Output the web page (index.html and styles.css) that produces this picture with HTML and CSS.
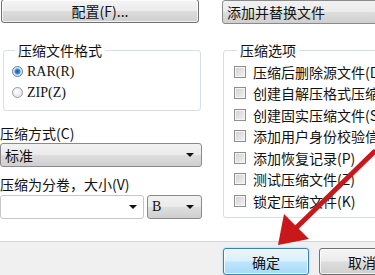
FILE: index.html
```html
<!DOCTYPE html>
<html lang="zh-CN">
<head>
    <meta charset="UTF-8">
    <title>压缩文件名和参数</title>
    <link rel="stylesheet" href="styles.css">
</head>
<body>
    <div class="dialog">
        <div class="main">
            <div class="col-left">
                <button class="btn btn-config">配置(F)...</button>

                <fieldset class="group group-format">
                    <legend>压缩文件格式</legend>
                    <div class="radio-row"><span class="radio checked"></span>RAR(R)</div>
                    <div class="radio-row"><span class="radio"></span>ZIP(Z)</div>
                </fieldset>

                <div class="field-label">压缩方式(C)</div>
                <div class="select select-method"><span>标准</span><span class="caret"></span></div>

                <div class="field-label label-split">压缩为分卷，大小(V)</div>
                <div class="combo-row">
                    <div class="combo"><span></span><span class="caret"></span></div>
                    <div class="select select-unit"><span>B</span><span class="caret"></span></div>
                </div>
            </div>

            <div class="col-right">
                <div class="select select-update"><span>添加并替换文件</span></div>

                <fieldset class="group group-options">
                    <legend>压缩选项</legend>
                    <div class="check-row"><span class="check"></span>压缩后删除源文件(D)</div>
                    <div class="check-row"><span class="check"></span>创建自解压格式压缩文件(X)</div>
                    <div class="check-row"><span class="check"></span>创建固实压缩文件(S)</div>
                    <div class="check-row"><span class="check"></span>添加用户身份校验信息(T)</div>
                    <div class="check-row"><span class="check"></span>添加恢复记录(P)</div>
                    <div class="check-row"><span class="check"></span>测试压缩文件(Z)</div>
                    <div class="check-row"><span class="check"></span>锁定压缩文件(K)</div>
                </fieldset>
            </div>
        </div>

        <div class="footer">
            <button class="btn btn-default">确定</button>
            <button class="btn">取消</button>
        </div>

        <!-- flèche rouge d'annotation -->
        <svg class="arrow" width="375" height="275" viewBox="0 0 375 275">
            <line x1="374" y1="152" x2="296" y2="228" stroke="#c8181c" stroke-width="5" stroke-linecap="round"/>
            <polygon points="278,245 284,214 309,239" fill="#c8181c"/>
        </svg>
    </div>
</body>
</html>
```

FILE: styles.css
```css
/* Fenêtre */
body {
    margin: 0;
    font-family: "Noto Sans CJK SC", "Liberation Sans", sans-serif;
    font-size: 14px;
    color: #111;
    background: #fff;
}

.dialog {
    position: relative;
    width: 375px;
    height: 275px;
    overflow: hidden;
}

.main {
    display: flex;
    height: 241px;
    background: #fff;
}

.col-left {
    width: 202px;
    flex: none;
}

.col-right {
    margin-left: 20px;
    width: 220px;
    flex: none;
}

/* Boutons */
.btn {
    font-family: inherit;
    font-size: 14px;
    line-height: 16px;
    color: #111;
    border: 1px solid #707070;
    border-radius: 3px;
    background: linear-gradient(#f4f4f4 0%, #ececec 48%, #dddddd 52%, #cfcfcf 100%);
    box-shadow: inset 0 0 0 1px rgba(255, 255, 255, 0.7);
    padding: 0;
}

.btn-config {
    display: block;
    margin: -1px 0 0 1px;
    width: 198px;
    height: 24px;
}

.btn-default {
    border-color: #3c7fb1;
    background: linear-gradient(#eaf6fd 0%, #d9f0fc 48%, #bee6fd 52%, #a7d9f5 100%);
    box-shadow: inset 0 0 0 1px rgba(255, 255, 255, 0.8), 0 0 2px #7fc4f0;
}

/* Group box */
.group {
    margin: 0;
    border: 1px solid #d5dfe5;
    border-radius: 3px;
    min-width: 0;
}

.group legend {
    padding: 0 3px;
    line-height: 16px;
    font-size: 14px;
}

.group-format {
    margin: 19px 0 0 3px;
    width: 198px;
    box-sizing: border-box;
    padding: 3px 8px 7px 8px;
}

.group-format legend {
    margin-left: 3px;
}

.radio-row {
    display: flex;
    align-items: center;
    height: 21px;
    font-family: "Liberation Serif", "Noto Sans CJK SC", serif;
    font-size: 14px;
}

.radio {
    width: 9px;
    height: 9px;
    border: 1px solid #9a9a9a;
    border-radius: 50%;
    background: radial-gradient(circle at 40% 40%, #ffffff, #dcdcdc);
    margin-right: 4px;
    box-sizing: content-box;
}

.radio.checked {
    border-color: #5a7fa0;
    background: radial-gradient(circle, #0f5ea8 0, #3d8fd6 2.5px, #d7e6f3 3.5px, #f4f8fb 100%);
}

/* Champs */
.field-label {
    margin-top: 14px;
    line-height: 16px;
}

.label-split {
    margin-top: 9px;
}

.select {
    display: flex;
    align-items: center;
    justify-content: space-between;
    box-sizing: border-box;
    height: 24px;
    padding: 0 7px 0 4px;
    border: 1px solid #8a8a8a;
    border-radius: 3px;
    background: linear-gradient(#f2f2f2 0%, #ebebeb 48%, #dddddd 52%, #cfcfcf 100%);
    line-height: 16px;
}

.select-method {
    margin-top: 2px;
    width: 202px;
}

.select-update {
    width: 200px;
}

.combo-row {
    display: flex;
    gap: 3px;
    margin-top: 3px;
}

.combo {
    display: flex;
    align-items: center;
    justify-content: flex-end;
    box-sizing: border-box;
    width: 144px;
    height: 24px;
    padding-right: 6px;
    border: 1px solid #c4c8cc;
    border-radius: 3px;
    background: #fff;
}

.select-unit {
    width: 55px;
    font-family: "Liberation Serif", serif;
}

.caret {
    width: 0;
    height: 0;
    border-left: 4px solid transparent;
    border-right: 4px solid transparent;
    border-top: 4px solid #111;
}

/* Options */
.group-options {
    margin: 18px 0 0 1px;
    width: 240px;
    box-sizing: border-box;
    padding: 3px 0 5px 10px;
}

.group-options legend {
    margin-left: 3px;
}

.check-row {
    display: flex;
    align-items: center;
    height: 21.5px;
    white-space: nowrap;
}

.check {
    flex: none;
    width: 10px;
    height: 10px;
    margin-right: 7px;
    border: 1px solid #8e8f8f;
    background: linear-gradient(135deg, #cfcfcf, #f4f4f4);
    box-shadow: inset 0 0 0 1px #f4f4f4;
}

/* Bas de fenêtre */
.footer {
    display: flex;
    gap: 10px;
    height: 34px;
    padding: 6px 0 0 223px;
    border-top: 1px solid #d4d4d4;
    background: #f0f0f0;
}

.footer .btn {
    width: 86px;
    height: 27px;
    flex: none;
}

.arrow {
    position: absolute;
    left: 0;
    top: 0;
    pointer-events: none;
}
```
